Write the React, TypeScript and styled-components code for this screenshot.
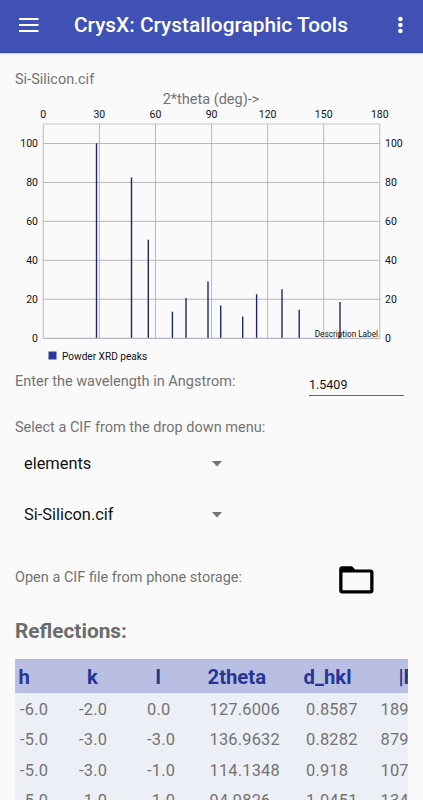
import React from 'react';
import styled, { createGlobalStyle } from 'styled-components';

const GlobalStyle = createGlobalStyle`
  * { box-sizing: border-box; }
  html, body { margin: 0; height: 100%; overflow: hidden; }
  body { background: #fafafa; font-family: Roboto, "Liberation Sans", sans-serif; color: #737373; }
`;

const Screen = styled.div`
  display: flex;
  flex-direction: column;
  height: 800px;
  overflow: hidden;
  background: #fafafa;
`;

const AppBar = styled.header`
  display: flex;
  align-items: center;
  flex: none;
  height: 53px;
  padding: 0 15px 3px 19px;
  background: #3f51b5;
  border-bottom: 1px solid #35479f;
  box-shadow: 0 1px 1px #c9d0f5;
`;

const Title = styled.h1`
  flex: 1;
  margin: 0 0 0 35px;
  font-size: 20.85px;
  line-height: 28px;
  font-weight: 500;
  color: #fff;
  white-space: nowrap;
`;

const IconButton = styled.button`
  display: flex;
  padding: 0;
  border: 0;
  background: none;
`;

const Content = styled.main`
  display: flex;
  flex-direction: column;
  flex: 1;
  min-height: 0;
  padding: 17px 15px 0;
`;

const Label = styled.div`
  font-size: 14.5px;
  line-height: 20px;
  white-space: nowrap;
`;

const AxisTitle = styled(Label)`
  align-self: center;
  height: 20px;
  margin-left: -1px;
`;

const Chart = styled.svg`
  display: block;
  flex: none;
  width: 393px;
  height: 262px;
  margin-top: -7px;
  font-family: Roboto, "Liberation Sans", sans-serif;
  font-size: 10.5px;
  fill: #111;
`;

const WavelengthRow = styled.div`
  display: flex;
  justify-content: space-between;
  height: 53px;
  padding-right: 4px;
  padding-top: 7px;
`;

const WavelengthInput = styled.input`
  width: 95px;
  height: 24px;
  padding: 2px 0 0;
  border: 0;
  border-bottom: 1px solid #666;
  background: none;
  font: 12.5px Roboto, "Liberation Sans", sans-serif;
  color: #111;
  outline: none;
`;

const Spinner = styled.button`
  display: flex;
  align-items: center;
  justify-content: space-between;
  width: 207px;
  height: 51px;
  flex: none;
  padding: 0 0 0 9px;
  border: 0;
  background: none;
  font: 16.4px Roboto, "Liberation Sans", sans-serif;
  color: #111;
`;

const SpinnerGroup = styled.div`
  display: flex;
  flex-direction: column;
`;

const OpenRow = styled.div`
  display: flex;
  justify-content: space-between;
  height: 34px;
  margin-top: 21px;
  padding: 7px 34px 0 0;
`;

const FolderButton = styled(IconButton)`
  align-self: flex-start;
  margin-top: -2px;
`;

const SectionTitle = styled.h2`
  margin: 22px 0 14px;
  font-size: 20.8px;
  line-height: 28px;
  font-weight: 700;
  color: #6c6c6c;
`;

const Table = styled.div`
  flex: 1;
  min-height: 0;
  overflow: hidden;
  background: #edeff6;
`;

const HeadRow = styled.div`
  display: grid;
  grid-template-columns: 68.5px 68.5px 52px 96px 95px 60px;
  height: 34px;
  padding-left: 3.5px;
  background: #b8bfe3;
  color: #283593;
  font-size: 20.3px;
  font-weight: 700;
  line-height: 37px;
  white-space: nowrap;
`;

const DataRow = styled.div`
  display: grid;
  grid-template-columns: 59px 68px 62.5px 96.5px 74.5px 60px;
  height: 30.3px;
  padding-left: 5px;
  font-size: 16.4px;
  line-height: 33px;
  letter-spacing: 0.2px;
  white-space: nowrap;
`;

const PEAKS: [number, number][] = [
  [96.5, 100], [131.5, 82.5], [148.3, 50.5], [172.4, 13.5], [186, 20.5], [208, 29],
  [220.7, 16.7], [242.7, 11], [256.6, 22.5], [282, 25], [299.2, 14.5], [340, 18.5],
];

const DATA = [
  ['-6.0', '-2.0', '0.0', '127.6006', '0.8587', '189'],
  ['-5.0', '-3.0', '-3.0', '136.9632', '0.8282', '879'],
  ['-5.0', '-3.0', '-1.0', '114.1348', '0.918', '107'],
  ['-5.0', '-1.0', '-1.0', '94.9826', '1.0451', '134'],
];

const xAt = (deg: number) => 43.3 + (deg * 336.5) / 180;
const yAt = (value: number) => 338 - value * 1.947;

function XrdChart() {
  return (
    <Chart viewBox="15 103 393 262">
      <g stroke="#aaaaad" strokeWidth="0.8" fill="none">
        {[0, 30, 60, 90, 120, 150, 180].map(d => (
          <line key={d} x1={xAt(d)} x2={xAt(d)} y1="124" y2="338" />
        ))}
        {[20, 40, 60, 80, 100].map(v => (
          <line key={v} x1="43" x2="380" y1={yAt(v) + 0.2} y2={yAt(v) + 0.2} />
        ))}
        <line x1="43" x2="380" y1="124" y2="124" stroke="#bcbcbc" />
      </g>
      {PEAKS.map(([x, v]) => (
        <line key={x} x1={x} x2={x} y1={yAt(v)} y2="338" stroke="#1c286e" strokeWidth="1.4" />
      ))}
      <line x1="43" x2="380" y1="338.3" y2="338.3" stroke="#a7a4b5" />
      {[0, 30, 60, 90, 120, 150, 180].map(d => (
        <text key={d} x={xAt(d)} y="118" textAnchor="middle">{d}</text>
      ))}
      {[0, 20, 40, 60, 80, 100].map(v => (
        <React.Fragment key={v}>
          <text x="38" y={yAt(v) + 3.6} textAnchor="end">{v}</text>
          <text x="385" y={yAt(v) + 3.6}>{v}</text>
        </React.Fragment>
      ))}
      <text x="378" y="336.6" textAnchor="end" fontSize="8.2">Description Label</text>
      <rect x="48.5" y="351.5" width="8" height="8" fill="#2a389a" />
      <text x="62" y="359.6" fontSize="10.1">Powder XRD peaks</text>
    </Chart>
  );
}

const Caret = () => (
  <svg width="10" height="6" viewBox="0 0 10 6"><path d="M0 0h10L5 5.4z" fill="#737373" /></svg>
);

export default function App() {
  return (
    <Screen>
      <GlobalStyle />
      <AppBar>
        <IconButton aria-label="Menu">
          <svg width="20" height="16" viewBox="0 0 20 16" fill="#fff">
            <path d="M0 1h19.5v1.9H0zM0 7h19.5v1.9H0zM0 13h19.5v1.9H0z" />
          </svg>
        </IconButton>
        <Title>CrysX: Crystallographic Tools</Title>
        <IconButton aria-label="More options">
          <svg width="16" height="18" viewBox="0 0 16 18" fill="#fff">
            <circle cx="8.4" cy="3" r="2.3" /><circle cx="8.4" cy="9" r="2.3" /><circle cx="8.4" cy="15" r="2.3" />
          </svg>
        </IconButton>
      </AppBar>
      <Content>
        <Label>Si-Silicon.cif</Label>
        <AxisTitle>2*theta (deg)-&gt;</AxisTitle>
        <XrdChart />
        <WavelengthRow>
          <Label>Enter the wavelength in Angstrom:</Label>
          <WavelengthInput defaultValue="1.5409" aria-label="Wavelength" />
        </WavelengthRow>
        <Label>Select a CIF from the drop down menu:</Label>
        <SpinnerGroup>
          <Spinner>elements<Caret /></Spinner>
          <Spinner>Si-Silicon.cif<Caret /></Spinner>
        </SpinnerGroup>
        <OpenRow>
          <Label>Open a CIF file from phone storage:</Label>
          <FolderButton aria-label="Open file">
            <svg width="35" height="28" viewBox="0 0 35 28">
              <path
                d="M3.2 0.2H13l3.2 3.2h15.3Q34.5 3.4 34.5 6.4v18q0 3-3 3h-28.3q-3 0-3-3V3.2q0-3 3-3zM3.5 6.5v17.8h27.7V6.5z"
                fill="#000"
                fillRule="evenodd"
              />
            </svg>
          </FolderButton>
        </OpenRow>
        <SectionTitle>Reflections:</SectionTitle>
        <Table>
          <HeadRow>
            {['h', 'k', 'l', '2theta', 'd_hkl', '|F|'].map(h => <span key={h}>{h}</span>)}
          </HeadRow>
          {DATA.map((row, i) => (
            <DataRow key={i}>{row.map((cell, j) => <span key={j}>{cell}</span>)}</DataRow>
          ))}
        </Table>
      </Content>
    </Screen>
  );
}
